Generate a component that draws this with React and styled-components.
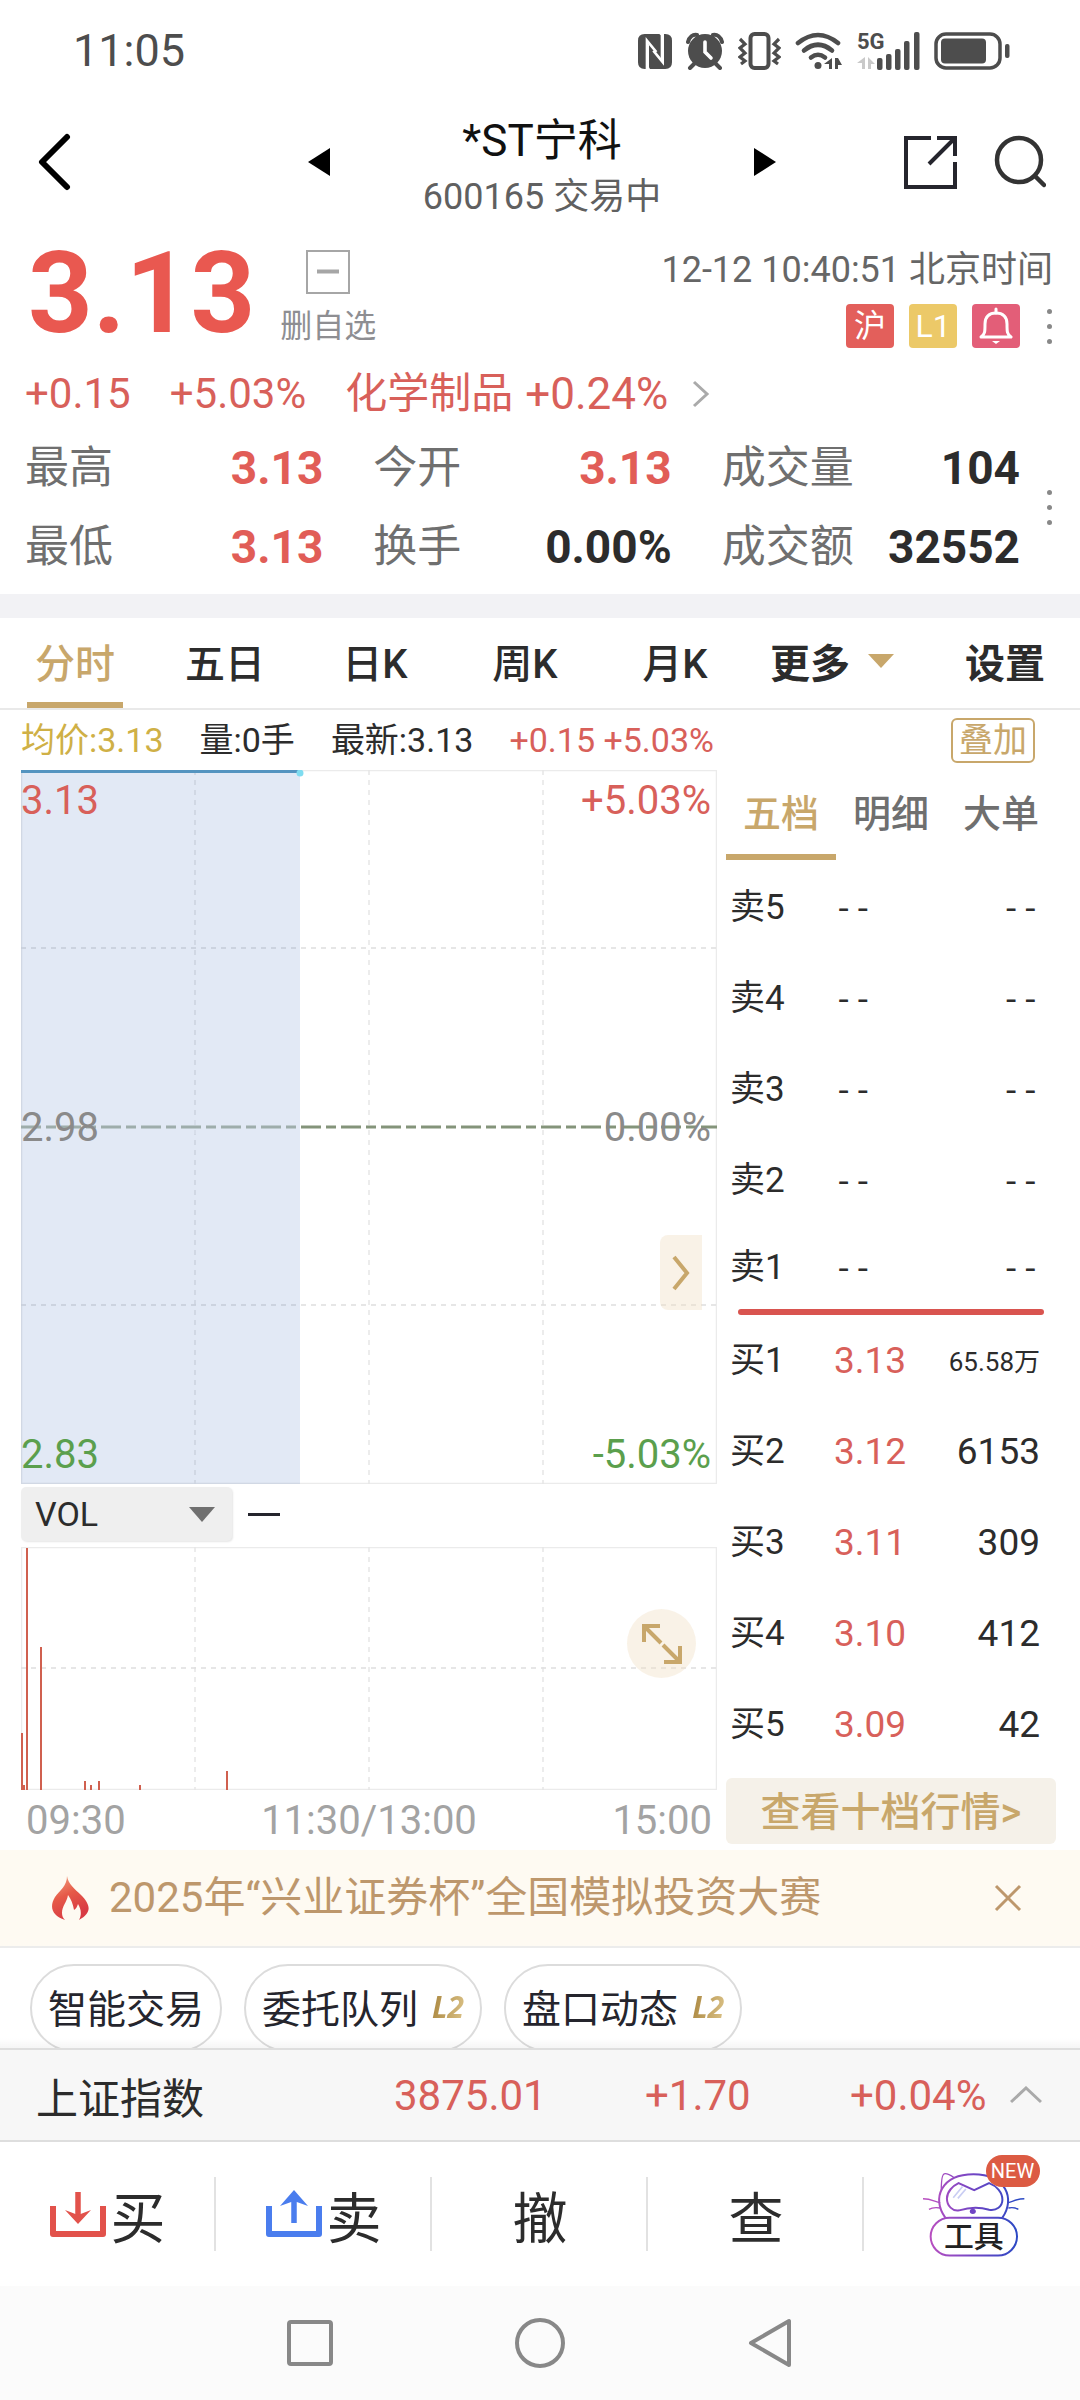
import React from "react";
import styled, { createGlobalStyle, css } from "styled-components";

const c = {
  red: "#d8605a",
  price: "#e95850",
  strong: "#e15d57",
  gold: "#c8a76b",
  green: "#5b9f4d",
  ink: "#2c2c2c",
  grey: "#6f6f6f",
  pale: "#a3a3a3",
};

const Global = createGlobalStyle`
  * { box-sizing: border-box; }
  body { margin: 0; background: #fff; }
  body, button, select {
    font-family: Roboto, "Noto Sans CJK SC", sans-serif;
  }
  button, select {
    margin: 0; padding: 0; border: 0; background: none; color: inherit;
    font-size: inherit; line-height: inherit; white-space: nowrap;
  }
  svg { display: block; flex: none; }
`;

const Page = styled.div`
  min-height: 100vh;
  display: flex;
  flex-direction: column;
  background: #fff;
  color: ${c.ink};
  overflow: hidden;
`;

/* ---------- status bar ---------- */
const StatusBar = styled.div`
  display: flex;
  align-items: center;
  justify-content: space-between;
  height: 102px;
  padding: 0 70px 0 73px;
  color: #4d4d4d;
  font-size: 45px;
  line-height: 48px;
`;
const StatusIcons = styled.div`
  display: flex;
  align-items: center;
  gap: 14px;
`;
const SignalBox = styled.span`
  display: flex;
  flex-direction: column;
  position: relative;
  height: 38px;
`;
const NetworkType = styled.span`
  position: absolute;
  left: 0;
  top: -2px;
  font-size: 22px;
  line-height: 24px;
  font-weight: 700;
`;

/* ---------- header ---------- */
const Header = styled.header`
  display: grid;
  grid-template-columns: 1fr 468px 1fr;
  align-items: center;
  height: 120px;
  padding: 0 34px 0 38px;
`;
const Switcher = styled.div`
  display: flex;
  align-items: center;
  justify-content: space-between;
`;
const TitleBlock = styled.div`
  display: flex;
  flex-direction: column;
  align-items: center;
  gap: 6px;
  padding-top: 8px;
`;
const Title = styled.h1`
  margin: 0;
  color: #111;
  font-size: 44px;
  line-height: 56px;
  font-weight: 400;
`;
const Subtitle = styled.div`
  color: #606060;
  font-size: 36px;
  line-height: 44px;
`;
const HeaderTools = styled.div`
  display: flex;
  justify-content: flex-end;
  gap: 36px;
`;

/* ---------- quote ---------- */
const Quote = styled.section`
  padding: 12px 27px 21px 25px;
`;
const QuoteTop = styled.div`
  display: flex;
  align-items: center;
  height: 120px;
`;
const Price = styled.div`
  margin-left: 3px;
  color: ${c.price};
  font-size: 113px;
  line-height: 120px;
  font-weight: 700;
`;
const WatchButton = styled.button`
  display: flex;
  flex-direction: column;
  align-items: center;
  gap: 14px;
  margin: 6px 0 0 25px;
  color: #8e8e92;
  font-size: 32px;
  line-height: 36px;
`;
const QuoteMeta = styled.div`
  display: flex;
  flex-direction: column;
  align-items: flex-end;
  gap: 12px;
  margin: 8px 0 0 auto;
  color: #666;
  font-size: 36px;
  line-height: 44px;
`;
const BadgeRow = styled.div`
  display: flex;
  align-items: center;
  gap: 15px;
`;
const Badge = styled.span`
  display: flex;
  align-items: center;
  justify-content: center;
  width: 48px;
  height: 44px;
  border-radius: 4px;
  background: ${(p) => p.$bg};
  color: #fff;
  font-size: 32px;
`;
const DotsButton = styled.button`
  display: flex;
  flex-direction: column;
  align-items: center;
  gap: 10px;
  width: 8px;
  margin-left: ${(p) => p.$gap || 0}px;
  span {
    width: 5px;
    height: 5px;
    border-radius: 50%;
    background: #888;
  }
`;
const ChangeRow = styled.div`
  display: flex;
  align-items: center;
  margin-top: 16px;
  color: ${c.red};
  font-size: 42px;
  line-height: 48px;
`;
const Change = styled.span`
  margin-right: 39px;
`;
const SectorLink = styled.a`
  display: flex;
  align-items: center;
  gap: 12px;
  color: inherit;
  text-decoration: none;
  span + span { font-size: 44px; }
  svg { margin-left: 12px; }
`;
const StatsArea = styled.div`
  display: flex;
  align-items: center;
  justify-content: space-between;
  margin-top: 24px;
`;
const Stats = styled.dl`
  flex: 1;
  display: grid;
  grid-template-columns: repeat(3, 1fr);
  gap: 27px 50px;
  margin: 0 25px 0 0;
`;
const Stat = styled.div`
  display: flex;
  justify-content: space-between;
  font-size: 44px;
  line-height: 52px;
  dt { color: ${c.grey}; }
  dd {
    margin: 0;
    color: ${(p) => (p.$up ? c.strong : c.ink)};
    font-size: 46px;
    font-weight: 700;
  }
`;
const Band = styled.div`
  height: 24px;
  background: #f2f2f5;
`;

/* ---------- period tabs ---------- */
const PeriodTabs = styled.nav`
  display: grid;
  grid-template-columns: repeat(5, 5fr) 6fr 5fr;
  height: 92px;
  border-bottom: 2px solid #e9e9e9;
`;
const PeriodTab = styled.button`
  position: relative;
  display: flex;
  align-items: center;
  justify-content: center;
  gap: 18px;
  padding: 0 ${(p) => (p.$menu ? 16 : 0)}px 4px 0;
  color: ${(p) => (p.$active ? c.gold : c.ink)};
  font-size: 40px;
  font-weight: ${(p) => (p.$bold ? 700 : 500)};
  ${(p) =>
    p.$active &&
    css`
      &::after {
        content: "";
        position: absolute;
        left: 27px;
        right: 27px;
        bottom: 0;
        height: 6px;
        background: ${c.gold};
      }
    `}
`;

/* ---------- chart area ---------- */
const InfoRow = styled.div`
  display: flex;
  align-items: center;
  gap: 36px;
  height: 60px;
  padding: 0 45px 0 21px;
  font-size: 34px;
  line-height: 40px;
  white-space: nowrap;
`;
const Tint = styled.span`
  color: ${(p) => p.$color};
`;
const OverlayButton = styled.button`
  height: 45px;
  margin-left: auto;
  padding: 0 6px;
  border: 2px solid ${c.gold};
  border-radius: 6px;
  color: ${c.gold};
`;
const Trading = styled.main`
  display: flex;
  gap: 9px;
  height: 1080px;
  padding: 0 24px 0 21px;
`;
const Charts = styled.div`
  flex: 1;
  min-width: 0;
  display: flex;
  flex-direction: column;
`;
const Plot = styled.div`
  position: relative;
  height: ${(p) => p.$h}px;
  & > svg {
    width: 100%;
    height: 100%;
  }
`;
const AxisLabels = styled.div`
  position: absolute;
  inset: 8px 6px 6px 0;
  display: flex;
  flex-direction: column;
  justify-content: space-between;
  font-size: 40px;
  line-height: 46px;
`;
const AxisRow = styled.div`
  display: flex;
  justify-content: space-between;
  color: ${(p) => p.$color};
`;
const FoldButton = styled.button`
  position: absolute;
  right: 15px;
  top: 465px;
  display: flex;
  align-items: center;
  justify-content: center;
  width: 42px;
  height: 75px;
  border-radius: 8px 0 0 8px;
  background: rgba(240, 222, 195, 0.4);
`;
const ExpandButton = styled.button`
  position: absolute;
  right: 21px;
  top: 62px;
  display: flex;
  align-items: center;
  justify-content: center;
  width: 69px;
  height: 69px;
  border-radius: 50%;
  background: rgba(240, 222, 195, 0.4);
`;
const IndicatorRow = styled.div`
  display: flex;
  align-items: center;
  gap: 16px;
  margin: 3px 0 6px;
`;
const SelectBox = styled.label`
  position: relative;
  select {
    display: block;
    appearance: none;
    width: 211px;
    height: 54px;
    padding-left: 14px;
    border-radius: 5px;
    background: #efefef;
    box-shadow: 1px 1px 2px rgba(0, 0, 0, 0.1);
    font-size: 34px;
  }
  svg {
    position: absolute;
    right: 17px;
    top: 20px;
    pointer-events: none;
  }
`;
const Dash = styled.span`
  width: 32px;
  height: 3px;
  background: #25252d;
`;
const TimeAxis = styled.div`
  display: flex;
  justify-content: space-between;
  padding: 7px 5px 0;
  color: ${c.pale};
  font-size: 40px;
  line-height: 48px;
`;

/* ---------- order book ---------- */
const Book = styled.aside`
  width: 330px;
  display: flex;
  flex-direction: column;
`;
const BookTabs = styled.div`
  display: grid;
  grid-template-columns: repeat(3, 1fr);
  height: 90px;
  margin-bottom: 2px;
`;
const BookTab = styled.button`
  padding-bottom: 4px;
  border-bottom: 6px solid ${(p) => (p.$active ? c.gold : "transparent")};
  color: ${(p) => (p.$active ? c.gold : c.grey)};
  font-size: 38px;
  font-weight: 500;
`;
const Levels = styled.table`
  width: 100%;
  border-collapse: collapse;
  table-layout: fixed;
  font-size: 37px;
  line-height: 40px;
  th, td {
    height: 91px;
    padding: 0;
    font-weight: 400;
    text-align: left;
  }
  th {
    width: 108px;
    padding-left: 4px;
    font-size: 35px;
  }
  td:last-child {
    padding-right: 16px;
    text-align: right;
  }
  tr.touch > * { height: 83px; }
`;
const Amount = styled.span`
  font-size: ${(p) => (p.$small ? 26 : 37)}px;
`;
const Blank = styled.span`
  font-family: "Liberation Mono", monospace;
  font-size: 32px;
`;
const Divider = styled.div`
  height: 6px;
  margin: 0 12px;
  border-radius: 3px;
  background: #d9544f;
`;
const DepthButton = styled.button`
  height: 66px;
  margin-top: 8px;
  padding-bottom: 4px;
  border-radius: 6px;
  background: #f5f1e9;
  color: ${c.gold};
  font-size: 40px;
  font-weight: 500;
`;

/* ---------- banner and chips ---------- */
const Banner = styled.div`
  display: flex;
  align-items: center;
  height: 98px;
  padding: 0 58px 0 52px;
  border-bottom: 2px solid #ececec;
  background: #fefaf2;
  color: #bd976c;
  font-size: 42px;
  line-height: 48px;
`;
const BannerLink = styled.a`
  flex: 1;
  display: flex;
  align-items: center;
  gap: 19px;
  color: inherit;
  text-decoration: none;
`;
const Chips = styled.div`
  position: relative;
  display: flex;
  gap: 22px;
  height: 100px;
  padding: 16px 30px 0;
  overflow: hidden;
  &::after {
    content: "";
    position: absolute;
    inset: auto 0 0;
    height: 10px;
    background: linear-gradient(rgba(0, 0, 0, 0), rgba(0, 0, 0, 0.04));
  }
`;
const Chip = styled.button`
  display: flex;
  align-items: center;
  gap: 14px;
  height: 88px;
  padding: 0 16px 4px;
  border: 2px solid #dcdcdc;
  border-radius: 44px;
  color: #25252d;
  font-size: 39px;
`;
const Level = styled.i`
  background: linear-gradient(100deg, #a8843c, #dcc388);
  background-clip: text;
  color: transparent;
  font-family: "Open Sans", sans-serif;
  font-size: 30px;
  font-weight: 700;
`;

/* ---------- bottom bars ---------- */
const IndexBar = styled.button`
  display: grid;
  grid-template-columns: 358px 251px 205px 1fr 32px;
  align-items: center;
  height: 94px;
  padding: 0 38px 0 36px;
  border-top: 2px solid #dedede;
  border-bottom: 2px solid #dedede;
  background: #f7f7f7;
  color: ${c.red};
  font-size: 42px;
  text-align: left;
`;
const Actions = styled.div`
  display: grid;
  grid-template-columns: repeat(5, 1fr);
  align-items: center;
  height: 144px;
`;
const Action = styled.button`
  display: flex;
  align-items: center;
  justify-content: center;
  gap: 4px;
  height: 74px;
  padding-left: 2px;
  border-right: ${(p) => (p.$last ? 0 : 2)}px solid #e2e2e2;
  font-size: 55px;
`;
const ToolArt = styled.span`
  position: relative;
`;
const NewTag = styled.span`
  position: absolute;
  left: 64px;
  top: -16px;
  width: 54px;
  height: 32px;
  border-radius: 16px;
  background: #dc5b43;
  color: #fff;
  font-size: 20px;
  line-height: 32px;
  text-align: center;
`;
const SystemNav = styled.div`
  flex: 1;
  display: flex;
  align-items: center;
  justify-content: center;
  gap: 181px;
  min-height: 114px;
  background: #fbfbfb;
`;

/* ---------- icons ---------- */
const Nfc = () => (
  <svg width="34" height="35" viewBox="0 0 102 105">
    <path d="M20 0h44l4 4v74L24 22v72l6 11H20Q0 105 0 85V20Q0 0 20 0z" fill="#4d4d4d" />
    <path d="M72 0h10q20 0 20 20v65q0 20-20 20H36l-3-5V28l43 54V12z" fill="#4d4d4d" />
    <path d="M27 105V20l28 34M74 0v84L46 50" fill="none" stroke="#fff" strokeWidth="8" />
  </svg>
);
const Alarm = () => (
  <svg width="38" height="38" viewBox="0 0 38 38">
    <g stroke="#4d4d4d" strokeWidth="4" strokeLinecap="round" fill="none">
      <path d="M2 10C3 5 7 2 11 3M36 10C35 5 31 2 27 3M8 32l-4 4M30 32l4 4" />
    </g>
    <circle cx="19" cy="19" r="17" fill="#4d4d4d" />
    <path d="M19 10v10l6 6" fill="none" stroke="#fff" strokeWidth="3.6" strokeLinecap="round" />
  </svg>
);
const Vibrate = () => (
  <svg width="43" height="38" viewBox="0 0 43 38" fill="none" stroke="#4d4d4d">
    <rect x="12.5" y="2" width="18" height="34" rx="4" strokeWidth="4" />
    <path d="M2 7l5 5-5 4 5 5-5 4 5 4-4 3M41 7l-5 5 5 4-5 5 5 4-5 4 4 3" strokeWidth="3.2" />
  </svg>
);
const Wifi = () => (
  <svg width="48" height="38" viewBox="0 0 48 38">
    <g fill="none" stroke="#4d4d4d" strokeWidth="4.6" strokeLinecap="round">
      <path d="M3 11Q23-5 43 11" />
      <path d="M9 18.500Q23 7 37 18.500" />
      <path d="M16 25.500Q23 20 30 25.500" />
    </g>
    <circle cx="23" cy="33.500" r="3.500" fill="#4d4d4d" />
    <path d="M37 26v11h-3v-5h-5zM40 37V26h3l4 7h-4v4z" fill="#4d4d4d" />
  </svg>
);
const Signal = () => (
  <SignalBox>
    <NetworkType>5G</NetworkType>
    <svg width="63" height="38" viewBox="0 0 63 38">
      <path d="M8 25v12H5v-6H0zM11 37V25l7 7h-4v5z" fill="#c9c9c9" />
      <g fill="#4d4d4d">
        <rect x="20" y="26" width="5.500" height="12" rx="2" />
        <rect x="29" y="22" width="5.500" height="16" rx="2" />
        <rect x="38" y="17" width="5.500" height="21" rx="2" />
        <rect x="47" y="9" width="5.500" height="29" rx="2" />
        <rect x="57" y="0" width="5.500" height="38" rx="2" />
      </g>
    </svg>
  </SignalBox>
);
const Battery = () => (
  <svg width="76" height="38" viewBox="0 0 76 38">
    <rect x="2" y="2" width="64" height="34" rx="10" fill="none" stroke="#4d4d4d" strokeWidth="3.500" />
    <rect x="7" y="6.500" width="45" height="25" rx="4" fill="#4d4d4d" />
    <rect x="71" y="12" width="4.500" height="14" rx="2" fill="#4d4d4d" />
  </svg>
);
const Back = () => (
  <svg width="34" height="58" viewBox="0 0 34 58">
    <path d="M29 4L4 29l25 25" fill="none" stroke="#000" strokeWidth="6" strokeLinecap="round" strokeLinejoin="round" />
  </svg>
);
const Triangle = ({ w, h, points, fill }) => (
  <svg width={w} height={h} viewBox={`0 0 ${w} ${h}`}>
    <polygon points={points} fill={fill} />
  </svg>
);
const Share = () => (
  <svg width="54" height="54" viewBox="0 0 54 54" fill="none" stroke="#25252d" strokeWidth="4">
    <path d="M27 3H2v49h49V27M33 3h18v18M51 3L25 29" />
  </svg>
);
const Search = () => (
  <svg width="52" height="54" viewBox="0 0 52 54" fill="none" stroke="#333" strokeWidth="4.500">
    <circle cx="25" cy="25" r="22" />
    <path d="M41 41l9 9" strokeLinecap="round" />
  </svg>
);
const Minus = () => (
  <svg width="44" height="44" viewBox="0 0 44 44">
    <rect x="1" y="1" width="42" height="42" fill="none" stroke="#a6a6a6" strokeWidth="2" />
    <path d="M11 21.500h22" stroke="#a6a6a6" strokeWidth="4" />
  </svg>
);
const Bell = () => (
  <svg width="34" height="38" viewBox="0 0 34 38" fill="none" stroke="#fff" strokeWidth="3">
    <path d="M2 30c4-3 4-5 4-13C6 10 10 6 17 6s11 4 11 11c0 8 0 10 4 13z" strokeLinejoin="round" />
    <path d="M17 2v4" strokeLinecap="round" />
    <path d="M13 34h8l-4 3z" fill="#fff" stroke="none" />
  </svg>
);
const Chevron = ({ w, h, d, color, sw }) => (
  <svg width={w} height={h} viewBox={`0 0 ${w} ${h}`} fill="none" stroke={color} strokeWidth={sw}>
    <path d={d} />
  </svg>
);
const Flame = () => (
  <svg width="38" height="44" viewBox="0 0 38 44">
    <defs>
      <linearGradient id="flame" x1="0" y1="0" x2="0.400" y2="1">
        <stop offset="0" stopColor="#f2a584" />
        <stop offset="0.500" stopColor="#e65a48" />
        <stop offset="1" stopColor="#d83a44" />
      </linearGradient>
    </defs>
    <path
      fill="url(#flame)"
      d="M15 0c1 8 8 13 14 19 10 10 11 18-2 25 3-6 2-11-1-16-1 3-2 5-4 6-1-6-3-11-6-15-1 7-6 11-6 18 0 3 1 5 3 7C0 40-3 31 3 21 8 14 15 10 15 0z"
    />
  </svg>
);
const BuyIcon = () => (
  <svg width="56" height="50" viewBox="0 0 56 50" fill="none" stroke="#e2524b">
    <path d="M3 17v28h50V17" strokeWidth="6" strokeLinejoin="round" />
    <path d="M28 3v26" strokeWidth="5.500" />
    <path d="M15 21l13 14 13-14-13 5z" fill="#e2524b" stroke="none" />
  </svg>
);
const SellIcon = () => (
  <svg width="56" height="50" viewBox="0 0 56 50" fill="none" stroke="#4a7dee">
    <path d="M3 17v28h50V17" strokeWidth="6" strokeLinejoin="round" />
    <path d="M28 8v26" strokeWidth="5.500" />
    <path d="M14 17L28 1l14 16-14-5z" fill="#4a7dee" stroke="none" />
  </svg>
);
const Cat = () => (
  <svg width="103" height="86" viewBox="120 98 310 258" fill="none" stroke="url(#cat)" strokeWidth="6">
    <defs>
      <linearGradient id="cat" gradientUnits="userSpaceOnUse" x1="145" y1="230" x2="407" y2="230">
        <stop offset="0" stopColor="#b84fc0" />
        <stop offset="0.500" stopColor="#7045c4" />
        <stop offset="1" stopColor="#2b49c4" />
      </linearGradient>
    </defs>
    <path d="M190 238C148 180 178 107 275 107s127 73 87 131" />
    <path d="M178 156c0-22 2-48 9-50 9-2 20 5 30 12" strokeWidth="4" />
    <path d="M195 180c0-20 18-38 35-46l47 21 45-21c22 8 40 28 40 50 0 20-18 34-40 30-28-8-58-8-90 2-20 4-37-14-37-36z" />
    <path d="M214 178l28-34M228 180l24-28" stroke="#c9cdf3" strokeWidth="5" />
    <path d="M123 181c24 0 34 8 52 12M141 213c10-6 22-6 34-4M428 181c-24 0-34 8-48 12M410 213c-10-6-20-6-30-4" strokeWidth="4" />
    <ellipse cx="273" cy="219" rx="9" ry="8" fill="#7045c4" stroke="none" />
    <rect x="146" y="238" width="260" height="114" rx="57" fill="#fff" />
    <text x="276" y="327" textAnchor="middle" fontFamily="Noto Sans CJK SC" fontSize="90" fontWeight="500" fill="#222" stroke="none">工具</text>
  </svg>
);

const Dots = ({ label, gap }) => (
  <DotsButton type="button" aria-label={label} $gap={gap}>
    <span /><span /><span />
  </DotsButton>
);

/* ---------- data ---------- */
const stats = [
  ["最高", "3.13", true],
  ["今开", "3.13", true],
  ["成交量", "104", false],
  ["最低", "3.13", true],
  ["换手", "0.00%", false],
  ["成交额", "32552", false],
];
const periods = ["分时", "五日", "日K", "周K", "月K"];
const asks = ["卖5", "卖4", "卖3", "卖2", "卖1"];
const bids = [
  ["买1", "3.13", "65.58万"],
  ["买2", "3.12", "6153"],
  ["买3", "3.11", "309"],
  ["买4", "3.10", "412"],
  ["买5", "3.09", "42"],
];
const volumes = [
  [0, 57], [2, 5], [5, 242], [19, 143], [63, 9], [69, 5], [77, 9], [118, 5], [205, 19],
];

const Grid = ({ h, rows }) => (
  <g fill="none" stroke="#dedede" strokeWidth="1.500">
    <rect x="0.500" y="0.500" width="695" height={h - 1} stroke="#ebebeb" />
    {[174, 348, 522].map((x) => (
      <path key={x} d={`M${x} 0V${h}`} strokeDasharray="5 5" stroke="#e6e6e6" />
    ))}
    {rows.map((y) => (
      <path key={y} d={`M0 ${y}H696`} strokeDasharray="5 5" />
    ))}
  </g>
);

export default function App() {
  return (
    <Page>
      <Global />
      <StatusBar>
        <span>11:05</span>
        <StatusIcons>
          <Nfc /><Alarm /><Vibrate /><Wifi /><Signal /><Battery />
        </StatusIcons>
      </StatusBar>

      <Header>
        <button type="button" aria-label="返回"><Back /></button>
        <Switcher>
          <button type="button" aria-label="上一只">
            <Triangle w={22} h={28} points="22,0 22,28 0,14" fill="#000" />
          </button>
          <TitleBlock>
            <Title>*ST宁科</Title>
            <Subtitle>600165 交易中</Subtitle>
          </TitleBlock>
          <button type="button" aria-label="下一只">
            <Triangle w={22} h={28} points="0,0 0,28 22,14" fill="#000" />
          </button>
        </Switcher>
        <HeaderTools>
          <button type="button" aria-label="分享"><Share /></button>
          <button type="button" aria-label="搜索"><Search /></button>
        </HeaderTools>
      </Header>

      <Quote>
        <QuoteTop>
          <Price>3.13</Price>
          <WatchButton type="button"><Minus />删自选</WatchButton>
          <QuoteMeta>
            <span>12-12 10:40:51 北京时间</span>
            <BadgeRow>
              <Badge $bg="#e35f5b">沪</Badge>
              <Badge $bg="#ecc968">L1</Badge>
              <Badge $bg="#e35e78"><Bell /></Badge>
              <Dots label="更多标签" gap={10} />
            </BadgeRow>
          </QuoteMeta>
        </QuoteTop>
        <ChangeRow>
          <Change>+0.15</Change>
          <Change>+5.03%</Change>
          <SectorLink href="#sector">
            <span>化学制品</span>
            <span>+0.24%</span>
            <Chevron w={18} h={28} d="M2 2l13 12L2 26" color="#aaa" sw={3} />
          </SectorLink>
        </ChangeRow>
        <StatsArea>
          <Stats>
            {stats.map(([k, v, up]) => (
              <Stat key={k} $up={up}><dt>{k}</dt><dd>{v}</dd></Stat>
            ))}
          </Stats>
          <Dots label="更多指标" />
        </StatsArea>
      </Quote>
      <Band />

      <PeriodTabs>
        {periods.map((p, i) => (
          <PeriodTab key={p} type="button" $active={i === 0}>{p}</PeriodTab>
        ))}
        <PeriodTab type="button" $bold $menu>
          更多
          <Triangle w={26} h={14} points="0,0 26,0 13,14" fill={c.gold} />
        </PeriodTab>
        <PeriodTab type="button" $bold>设置</PeriodTab>
      </PeriodTabs>

      <InfoRow>
        <Tint $color="#cfb046">均价:3.13</Tint>
        <span>量:0手</span>
        <span>最新:3.13</span>
        <Tint $color={c.red}>+0.15 +5.03%</Tint>
        <OverlayButton type="button">叠加</OverlayButton>
      </InfoRow>

      <Trading>
        <Charts>
          <Plot $h={714}>
            <svg viewBox="0 0 696 714" preserveAspectRatio="none">
              <Grid h={714} rows={[178, 535]} />
              <path d="M0 357H696" stroke="#84947a" strokeWidth="3" strokeDasharray="20 5 10 5" />
              <rect y="350" width="279" height="14" fill="#fff" opacity="0.350" />
              <rect width="279" height="714" fill="#3f6db9" opacity="0.150" />
              <path d="M0 1.500H279" stroke="#5494c0" strokeWidth="3" />
              <circle cx="279" cy="3" r="3.500" fill="#7fdcf0" />
            </svg>
            <AxisLabels>
              <AxisRow $color={c.red}><span>3.13</span><span>+5.03%</span></AxisRow>
              <AxisRow $color="#8a8a8a"><span>2.98</span><span>0.00%</span></AxisRow>
              <AxisRow $color={c.green}><span>2.83</span><span>-5.03%</span></AxisRow>
            </AxisLabels>
            <FoldButton type="button" aria-label="收起盘口">
              <Chevron w={20} h={36} d="M3 2l13 16L3 34" color={c.gold} sw={4} />
            </FoldButton>
          </Plot>
          <IndicatorRow>
            <SelectBox>
              <select aria-label="指标"><option>VOL</option></select>
              <Triangle w={26} h={15} points="0,0 26,0 13,15" fill="#707070" />
            </SelectBox>
            <Dash />
          </IndicatorRow>
          <Plot $h={243}>
            <svg viewBox="0 0 696 243" preserveAspectRatio="none">
              <Grid h={243} rows={[121]} />
              {volumes.map(([x, v]) => (
                <rect key={x} x={x} y={243 - v} width="2" height={v} fill="#d0604f" />
              ))}
            </svg>
            <ExpandButton type="button" aria-label="横屏">
              <svg width="42" height="42" viewBox="0 0 42 42" fill="none" stroke={c.gold} strokeWidth="4">
                <path d="M3 19V3h16M3 3l17 17M39 23v16H23M39 39L22 22" />
              </svg>
            </ExpandButton>
          </Plot>
          <TimeAxis><span>09:30</span><span>11:30/13:00</span><span>15:00</span></TimeAxis>
        </Charts>

        <Book>
          <BookTabs>
            <BookTab type="button" $active>五档</BookTab>
            <BookTab type="button">明细</BookTab>
            <BookTab type="button">大单</BookTab>
          </BookTabs>
          <Levels>
            <tbody>
              {asks.map((a) => (
                <tr key={a} className={a === "卖1" ? "touch" : undefined}>
                  <th scope="row">{a}</th>
                  <td><Blank>--</Blank></td>
                  <td><Blank>--</Blank></td>
                </tr>
              ))}
            </tbody>
          </Levels>
          <Divider />
          <Levels>
            <tbody>
              {bids.map(([k, price, amount]) => (
                <tr key={k}>
                  <th scope="row">{k}</th>
                  <td><Tint $color={c.red}>{price}</Tint></td>
                  <td><Amount $small={amount.length > 5}>{amount}</Amount></td>
                </tr>
              ))}
            </tbody>
          </Levels>
          <DepthButton type="button">查看十档行情&gt;</DepthButton>
        </Book>
      </Trading>

      <Banner>
        <BannerLink href="#contest"><Flame />2025年“兴业证券杯”全国模拟投资大赛</BannerLink>
        <button type="button" aria-label="关闭">
          <Chevron w={28} h={28} d="M2 2l24 24M26 2L2 26" color="#bd976c" sw={3} />
        </button>
      </Banner>

      <Chips>
        <Chip type="button">智能交易</Chip>
        <Chip type="button">委托队列<Level>L2</Level></Chip>
        <Chip type="button">盘口动态<Level>L2</Level></Chip>
      </Chips>

      <IndexBar type="button">
        <Tint $color={c.ink}>上证指数</Tint>
        <span>3875.01</span>
        <span>+1.70</span>
        <span>+0.04%</span>
        <Chevron w={32} h={18} d="M1 16L16 2l15 14" color="#aaa" sw={3} />
      </IndexBar>

      <Actions>
        <Action type="button"><BuyIcon />买</Action>
        <Action type="button"><SellIcon />卖</Action>
        <Action type="button">撤</Action>
        <Action type="button">查</Action>
        <Action type="button" $last>
          <ToolArt><Cat /><NewTag>NEW</NewTag></ToolArt>
        </Action>
      </Actions>

      <SystemNav>
        <svg width="48" height="48" viewBox="0 0 48 48" fill="none" stroke="#888" strokeWidth="4">
          <rect x="3" y="3" width="42" height="42" rx="2" />
        </svg>
        <svg width="50" height="50" viewBox="0 0 50 50" fill="none" stroke="#888" strokeWidth="4">
          <circle cx="25" cy="25" r="23" />
        </svg>
        <svg width="48" height="50" viewBox="0 0 48 50" fill="none" stroke="#888" strokeWidth="4">
          <path d="M43 3v44L5 25z" strokeLinejoin="round" />
        </svg>
      </SystemNav>
    </Page>
  );
}
